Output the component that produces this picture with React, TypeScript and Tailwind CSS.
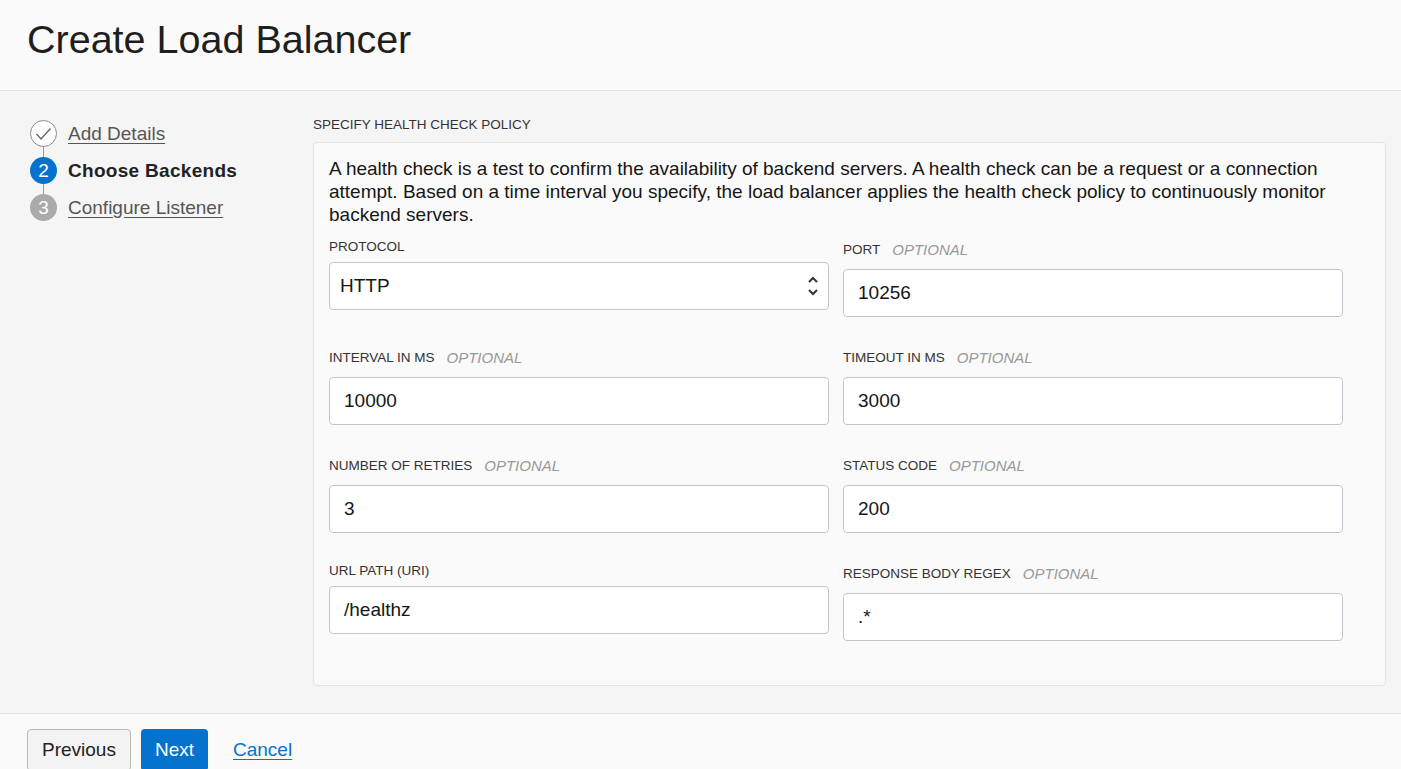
import { ReactNode } from "react";

const font = { fontFamily: '"Liberation Sans", Arial, sans-serif' };

type FieldProps = {
  label: string;
  optional?: boolean;
  children: ReactNode;
};

const Field = ({ label, optional, children }: FieldProps) => (
  <div className="flex flex-col">
    <div
      className={`flex items-center gap-[12px] text-[13.5px] uppercase text-[#333] mb-[7px] ${
        optional ? "h-[23px]" : "h-[16px]"
      }`}
    >
      <span>{label}</span>
      {optional && <span className="italic text-[#999] text-[15px]">Optional</span>}
    </div>
    {children}
  </div>
);

const TextInput = ({ value }: { value: string }) => (
  <div className="h-[48px] w-full bg-white border border-[#c3c7cd] rounded-[4px] flex items-center pl-[14px] text-[19px] text-[#161616]">
    {value}
  </div>
);

const SelectInput = ({ value }: { value: string }) => (
  <div className="h-[48px] w-full bg-white border border-[#c3c7cd] rounded-[4px] flex items-center justify-between pl-[10px] pr-[9px] text-[19px] text-[#161616]">
    <span>{value}</span>
    <svg width="12" height="22" viewBox="0 0 12 22" fill="none" stroke="#333" strokeWidth="2">
      <path d="M2 7 L6 3 L10 7" />
      <path d="M2 15 L6 19 L10 15" />
    </svg>
  </div>
);

const StepIcon = ({ kind, num }: { kind: "done" | "current" | "todo"; num?: number }) => {
  if (kind === "done") {
    return (
      <div className="w-[27px] h-[27px] rounded-full border border-[#8a8a8a] bg-white flex items-center justify-center">
        <svg width="17" height="14" viewBox="0 0 17 14" fill="none" stroke="#6b6b6b" strokeWidth="1.5">
          <path d="M1.5 7 L6 12 L15.5 1.5" />
        </svg>
      </div>
    );
  }
  return (
    <div
      className={`w-[27px] h-[27px] rounded-full flex items-center justify-center text-white text-[19px] leading-none ${
        kind === "current" ? "bg-[#0572ce]" : "bg-[#aaaaaa]"
      }`}
    >
      {num}
    </div>
  );
};

export default function App() {
  return (
    <div style={font} className="min-h-[769px] w-full bg-[#f5f5f5] flex flex-col text-[#161616]">
      {/* header */}
      <header className="h-[91px] bg-[#fafafa] border-b border-[#e4e4e4] flex items-center pl-[27px]">
        <h1 className="text-[39.5px] text-[#1e1e1e] leading-none pb-[11px]">Create Load Balancer</h1>
      </header>

      {/* body */}
      <div className="flex h-[622px]">
        {/* steps */}
        <nav className="w-[313px] shrink-0 pl-[30px] pt-[29px] flex flex-col">
          <div className="flex items-center gap-[11px] h-[27px]">
            <StepIcon kind="done" />
            <a className="text-[19px] leading-[27px] text-[#555] underline underline-offset-[3px]">Add Details</a>
          </div>
          <div className="w-[1px] h-[10px] bg-[#9a9a9a] ml-[13px]" />
          <div className="flex items-center gap-[11px] h-[27px]">
            <StepIcon kind="current" num={2} />
            <span className="text-[19px] leading-[27px] font-bold text-[#222] tracking-[0.3px]">Choose Backends</span>
          </div>
          <div className="w-[1px] h-[10px] bg-[#9a9a9a] ml-[13px]" />
          <div className="flex items-center gap-[11px] h-[27px]">
            <StepIcon kind="todo" num={3} />
            <a className="text-[19px] leading-[27px] text-[#555] underline underline-offset-[3px]">Configure Listener</a>
          </div>
        </nav>

        {/* health check */}
        <section className="flex-1 pr-[15px] pt-[26px] flex flex-col">
          <div className="text-[13.5px] uppercase text-[#333] h-[16px] leading-[16px]">Specify Health Check Policy</div>
          <div className="mt-[9px] bg-[#fafafa] border border-[#e4e4e4] rounded-[4px] pl-[15px] pt-[14px] pb-[44px]">
            <p className="text-[19px] leading-[23px] text-[#161616] pr-[20px]">
              A health check is a test to confirm the availability of backend servers. A health check can be a request
              or a connection attempt. Based on a time interval you specify, the load balancer applies the health check
              policy to continuously monitor backend servers.
            </p>
            <div className="mt-[13px] w-[1014px] grid grid-cols-2 gap-x-[14px] gap-y-[30px] items-start">
              <Field label="Protocol">
                <SelectInput value="HTTP" />
              </Field>
              <Field label="Port" optional>
                <TextInput value="10256" />
              </Field>
              <Field label="Interval in ms" optional>
                <TextInput value="10000" />
              </Field>
              <Field label="Timeout in ms" optional>
                <TextInput value="3000" />
              </Field>
              <Field label="Number of retries" optional>
                <TextInput value="3" />
              </Field>
              <Field label="Status code" optional>
                <TextInput value="200" />
              </Field>
              <Field label="URL Path (URI)">
                <TextInput value="/healthz" />
              </Field>
              <Field label="Response body regex" optional>
                <TextInput value=".*" />
              </Field>
            </div>
          </div>
        </section>
      </div>

      {/* footer */}
      <footer className="flex-1 bg-[#fafafa] border-t border-[#e4e4e4] flex items-start pl-[27px] pt-[15px] gap-[10px]">
        <button className="h-[42px] px-[14px] bg-[#f3f3f3] border border-[#b8b8b8] rounded-[4px] text-[19px] text-[#222]">
          Previous
        </button>
        <button className="h-[42px] px-[14px] bg-[#0572ce] rounded-[4px] text-[19px] text-white">Next</button>
        <a className="ml-[15px] h-[42px] flex items-center text-[19px] text-[#0572ce] underline underline-offset-[3px]">
          Cancel
        </a>
      </footer>
    </div>
  );
}
